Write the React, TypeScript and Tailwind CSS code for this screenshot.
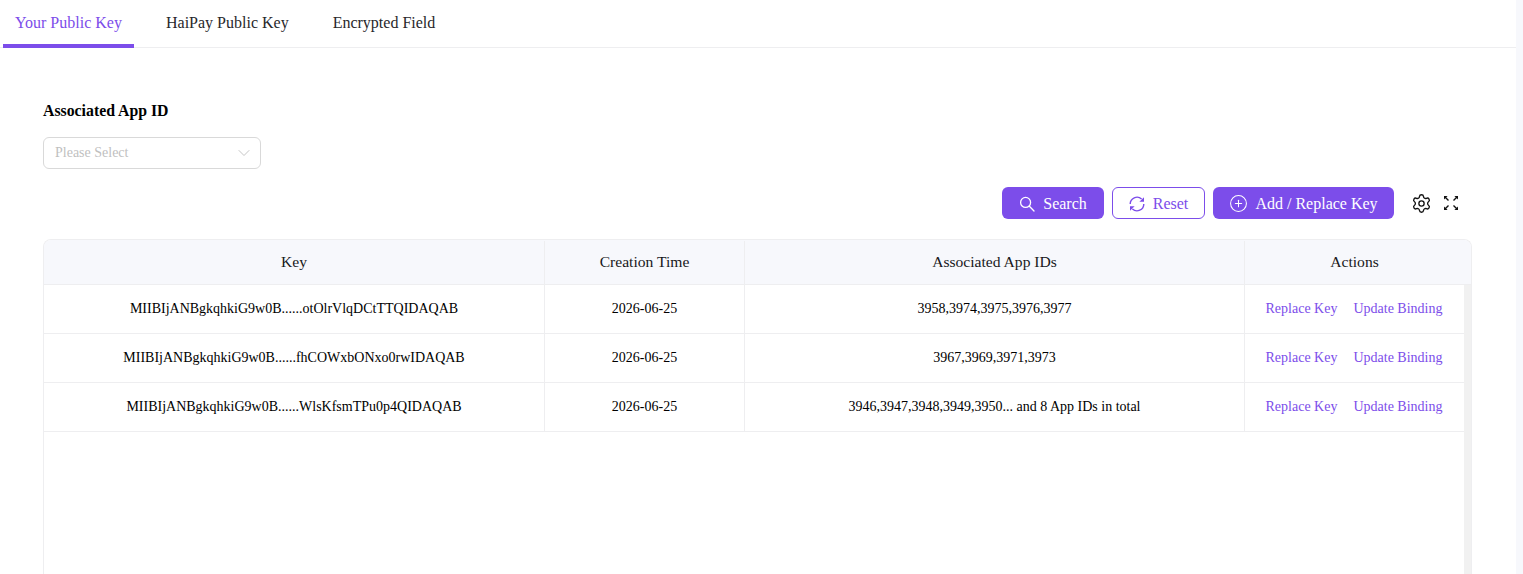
import { ChevronDown, CirclePlus, Settings } from 'lucide-react';

const rows = [
  {
    key: 'MIIBIjANBgkqhkiG9w0B......otOlrVlqDCtTTQIDAQAB',
    time: '2026-06-25',
    apps: '3958,3974,3975,3976,3977',
  },
  {
    key: 'MIIBIjANBgkqhkiG9w0B......fhCOWxbONxo0rwIDAQAB',
    time: '2026-06-25',
    apps: '3967,3969,3971,3973',
  },
  {
    key: 'MIIBIjANBgkqhkiG9w0B......WlsKfsmTPu0p4QIDAQAB',
    time: '2026-06-25',
    apps: '3946,3947,3948,3949,3950... and 8 App IDs in total',
  },
];

function SearchIcon() {
  return (
    <svg viewBox="0 0 16 16" className="h-4 w-4" fill="none" stroke="currentColor" strokeWidth="1.3" strokeLinecap="round">
      <circle cx="6.6" cy="6.4" r="5" />
      <path d="M10.4 10.2l4.6 4.8" />
    </svg>
  );
}

function ReloadIcon() {
  return (
    <svg viewBox="0 0 16 16" className="h-4 w-4" fill="none" stroke="currentColor" strokeWidth="1.4">
      <path d="M1.2 8a6.8 6.8 0 0 1 11.4-5" />
      <path d="M14.8 8a6.8 6.8 0 0 1-11.4 5" />
      <path d="M15 1.2v4.6h-4.6z" fill="currentColor" stroke="none" />
      <path d="M1 14.8v-4.6h4.6z" fill="currentColor" stroke="none" />
    </svg>
  );
}

function ExpandIcon() {
  return (
    <svg viewBox="0 0 16 16" className="h-4 w-4" fill="none" stroke="currentColor" strokeWidth="1.4">
      <path d="M1.5 1.5l4 4M10.5 5.5l4-4M1.5 14.5l4-4M10.5 10.5l4 4" />
      <path d="M1 1h3.6L1 4.6z" fill="currentColor" stroke="none" />
      <path d="M15 1h-3.6L15 4.6z" fill="currentColor" stroke="none" />
      <path d="M1 15h3.6L1 11.4z" fill="currentColor" stroke="none" />
      <path d="M15 15h-3.6L15 11.4z" fill="currentColor" stroke="none" />
    </svg>
  );
}

export default function App() {
  return (
    <div className="flex h-[574px] overflow-hidden bg-white font-['Liberation_Serif',serif] text-sm text-black">
      <div className="w-[1516px] shrink-0">
        {/* Tabs */}
        <div className="flex h-12 gap-[19px] border-b border-[#eeeef0] pl-[3px] text-base text-[#27272a]">
          <div className="flex h-12 w-[131px] items-center justify-center border-b-4 border-[#7c4dea] pt-px text-[#7c4dea]">Your Public Key</div>
          <div className="flex h-[47px] items-center pr-3 pb-[2px] pl-[13px]">HaiPay Public Key</div>
          <div className="flex h-[47px] items-center px-[13px] pb-[2px]">Encrypted Field</div>
        </div>

        <div className="px-[43px] pt-[54px]">
          {/* Filter */}
          <div className="text-[15.8px] leading-[18px] font-bold">Associated App ID</div>
          <div className="mt-[17px] flex h-8 w-[218px] items-center justify-between rounded-md border border-[#d9d9d9] pr-[6px] pl-[11px] text-[#bfbfbf]">
            <span>Please Select</span>
            <ChevronDown size={20} strokeWidth={1.1} />
          </div>

          {/* Toolbar */}
          <div className="mt-[18px] flex h-8 items-center justify-end gap-2 pr-[14px] text-base">
            <button className="flex h-8 w-[102px] items-center justify-center gap-2 rounded-md bg-[#7c4dea] pt-px text-white">
              <SearchIcon />
              Search
            </button>
            <button className="flex h-8 w-[93px] items-center justify-center gap-2 rounded-md border border-[#7c4dea] pt-px text-[#7c4dea]">
              <ReloadIcon />
              Reset
            </button>
            <button className="flex h-8 w-[181px] items-center justify-center gap-[7px] rounded-md bg-[#7c4dea] pt-px text-white">
              <CirclePlus size={19} strokeWidth={1.3} />
              Add / Replace Key
            </button>
            <span className="ml-[9px] flex items-center gap-[11px] text-[#111]">
              <Settings size={21} strokeWidth={1.5} />
              <ExpandIcon />
            </span>
          </div>

          {/* Table */}
          <div className="mt-[20px] h-[400px] w-[1429px] overflow-hidden rounded-t-lg border-x border-t border-[#eeeef0]">
            <div className="grid h-[45px] grid-cols-[501px_200px_500px_1fr] border-b border-[#eeeef0] bg-[#f7f8fc] pt-px text-[15.6px] text-[#18181b]">
              <div className="flex items-center justify-center border-r border-[#eeeef0]">Key</div>
              <div className="flex items-center justify-center border-r border-[#eeeef0]">Creation Time</div>
              <div className="flex items-center justify-center border-r border-[#eeeef0]">Associated App IDs</div>
              <div className="flex items-center justify-center pr-[7px]">Actions</div>
            </div>
            <div className="flex h-full">
              <div className="w-[1421px]">
                {rows.map((row) => (
                  <div key={row.key} className="grid h-[49px] grid-cols-[501px_200px_500px_1fr] border-b border-[#eeeef0]">
                    <div className="flex items-center justify-center border-r border-[#eeeef0]">{row.key}</div>
                    <div className="flex items-center justify-center border-r border-[#eeeef0]">{row.time}</div>
                    <div className="flex items-center justify-center border-r border-[#eeeef0]">{row.apps}</div>
                    <div className="flex items-center justify-center gap-4 pr-px text-[#7c4dea]">
                      <span>Replace Key</span>
                      <span>Update Binding</span>
                    </div>
                  </div>
                ))}
              </div>
              <div className="w-[7px] bg-[#f1f1f1]" />
            </div>
          </div>
        </div>
      </div>
      <div className="flex-1 bg-[#f7f8fc]" />
    </div>
  );
}
